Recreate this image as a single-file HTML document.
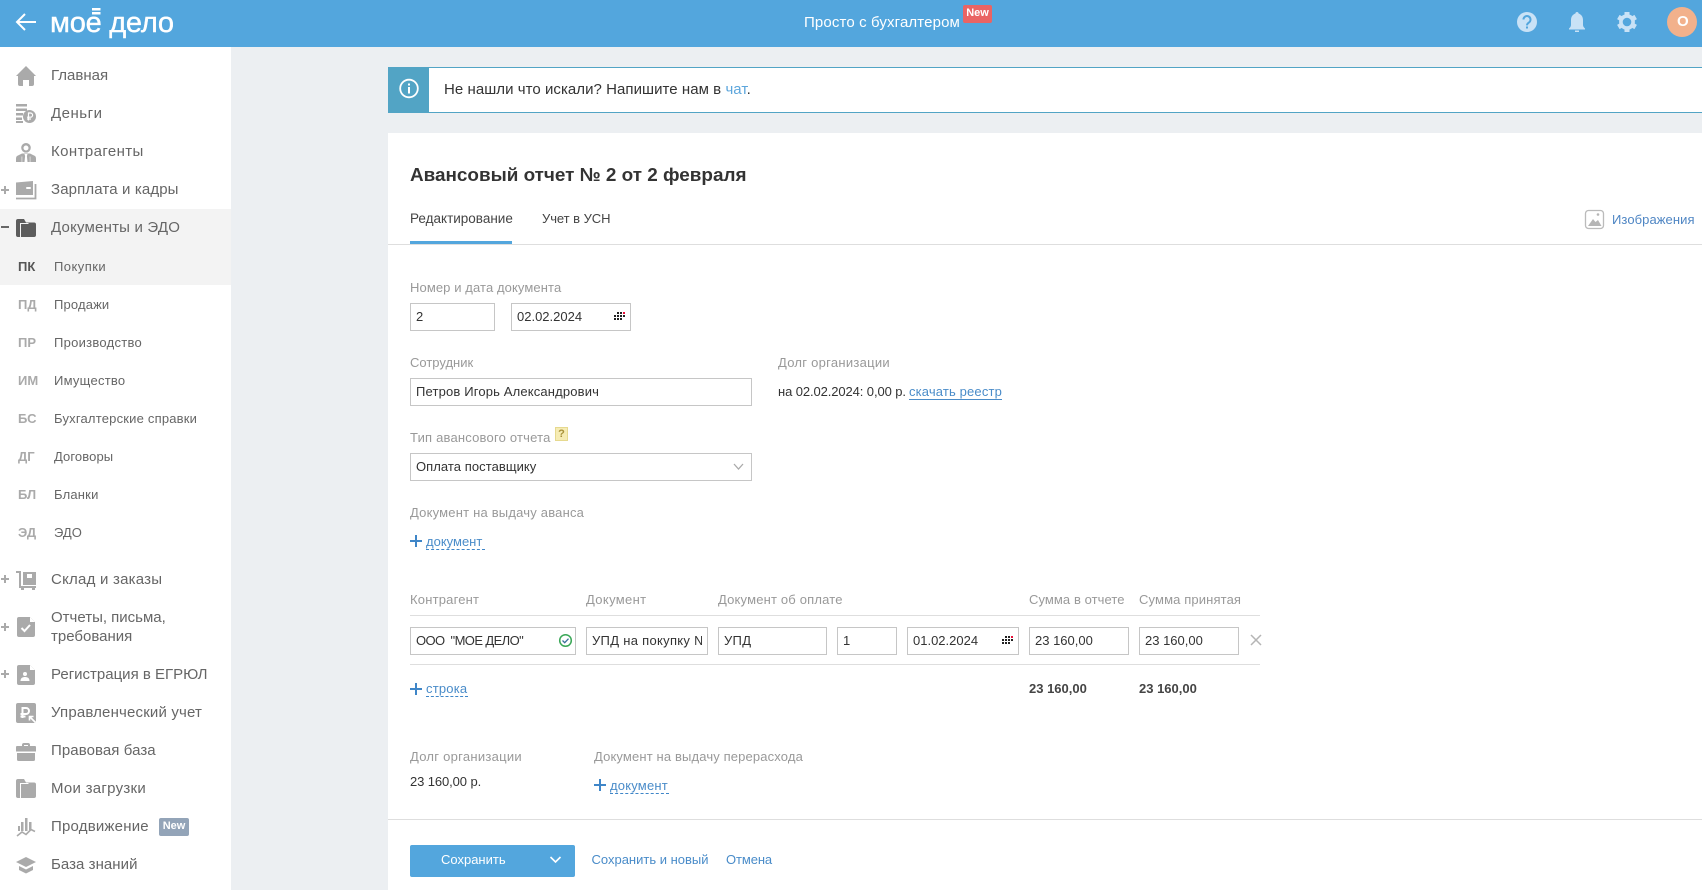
<!DOCTYPE html>
<html lang="ru"><head><meta charset="utf-8"><title>Авансовый отчет</title>
<style>
html,body{margin:0;padding:0}
body{position:relative;width:1702px;height:890px;overflow:hidden;background:#eceff2;font-family:"Liberation Sans",Arial,sans-serif;color:#333}
.abs,.t,.in{position:absolute}
.t{white-space:nowrap;line-height:20px;height:20px}
header{position:absolute;left:0;top:0;width:1702px;height:47px;background:#53a6dd}
aside{position:absolute;left:0;top:47px;width:231px;height:843px;background:#fff}
.m{left:51px;font-size:15px;color:#666}
.s{left:54px;font-size:13px;color:#666}
.a{left:18px;font-size:13px;font-weight:bold;color:#aaa}
.l{font-size:13px;color:#999}
.v{font-size:13px;color:#333}
.in{box-sizing:border-box;height:28px;border:1px solid #c6c6c6;background:#fff;font-size:13px;line-height:26px;padding-left:5px;color:#333;white-space:nowrap;overflow:hidden}
.lk{color:#4a8cc9}
.dash{border-bottom:1px dashed #3f86c8;height:0;position:absolute}
.hr{position:absolute;height:1px;background:#dedede}
.plus{position:absolute;width:12px;height:12px}
.plus:before,.plus:after{content:"";position:absolute;background:#3f86c8}
.plus:before{left:0;right:0;top:5px;height:2px}
.plus:after{top:0;bottom:0;left:5px;width:2px}
svg{position:absolute;left:0;top:0}
</style></head><body>

<header>
<svg width="1702" height="47" viewBox="0 0 1702 47">
<path d="M36 22H17M25 14l-8 8 8 8" fill="none" stroke="#fff" stroke-width="2"/>
<rect x="92" y="8" width="8.500" height="2.500" fill="#fff"/><rect x="92" y="12" width="8.500" height="2.500" fill="#fff"/>
<circle cx="1527" cy="22" r="10" fill="#c9e2f6"/>
<path d="M1523.500 19.500a3.500 3.500 0 1 1 5.500 2.900c-1.300.9-2 1.500-2 3" fill="none" stroke="#53a6dd" stroke-width="2"/><rect x="1526" y="26.500" width="2" height="2" fill="#53a6dd"/>
<path d="M1577 12c1 0 1.500.6 1.600 1.500 2.700.9 4.400 3.300 4.400 6.500v5c0 1.500 1 2.500 2 3.500v1h-16v-1c1-1 2-2 2-3.500v-5c0-3.200 1.700-5.600 4.400-6.500.1-.9.600-1.500 1.600-1.500z" fill="#c9e2f6"/><rect x="1575" y="30.500" width="4" height="1.500" fill="#c9e2f6"/>
<g fill="#c9e2f6">
<circle cx="1627" cy="22" r="6.100" fill="none" stroke="#c9e2f6" stroke-width="3.600"/>
<rect x="1624.500" y="12" width="5" height="4"/>
<rect x="1624.500" y="12" width="5" height="4" transform="rotate(60 1627 22)"/>
<rect x="1624.500" y="12" width="5" height="4" transform="rotate(120 1627 22)"/>
<rect x="1624.500" y="12" width="5" height="4" transform="rotate(180 1627 22)"/>
<rect x="1624.500" y="12" width="5" height="4" transform="rotate(240 1627 22)"/>
<rect x="1624.500" y="12" width="5" height="4" transform="rotate(300 1627 22)"/>
</g>
<circle cx="1682" cy="22" r="15" fill="#f2b18c"/>
</svg>
<div class="t" style="left:50px;top:7px;font-size:29px;color:#fff;line-height:32px;height:32px;letter-spacing:-.25px;-webkit-text-stroke:.4px #fff">мое дело</div>
<div class="t" style="left:804px;top:13px;font-size:15px;letter-spacing:.13px;color:#fff">Просто с бухгалтером</div>
<div class="abs" style="left:963px;top:5px;width:29px;height:18px;background:#ea6464;border-radius:2px;color:#fff;font-size:11px;font-weight:bold;text-align:center;line-height:16px">New</div>
<div class="t" style="left:1677px;top:12px;font-size:15px;font-weight:bold;color:#fff;width:10px;text-align:center">О</div>
</header>

<aside></aside>
<div class="abs" style="left:0;top:209px;width:231px;height:76px;background:#f3f3f3"></div>

<svg width="231" height="890" viewBox="0 0 231 890" style="z-index:1">
<g fill="#aaa">
<!-- home -->
<path d="M26 66L36 76H34V84a2 2 0 0 1-2 2H29V80H23V86H20a2 2 0 0 1-2-2V76H16Z"/>
<!-- money -->
<path d="M16 104h11v2.500H16zM16 108.500h11V111H16zM16 113h7v2.500h-7zM16 117.500h6V120h-6zM16 121h7v2h-7z"/>
<circle cx="29.500" cy="116.500" r="6.500"/>
<path d="M28.500 120.500v-7.500h2a2 2 0 0 1 0 4.200h-3.500M27 119h4" fill="none" stroke="#fff" stroke-width="1.200"/>
<!-- contragent -->
<path fill-rule="evenodd" d="M26 143a4.800 4.800 0 1 1 0 9.600 4.800 4.800 0 0 1 0-9.600zm0 2.500a2.500 2.500 0 1 0 0 5 2.500 2.500 0 0 0 0-5z"/>
<path d="M22 153.500h8l5 2.500c.7.500 1 1.500 1 3v3H16v-3c0-1.500.3-2.500 1-3z"/>
<path d="M24.500 154h3l-.6 2 .6 6h-3l.6-6z" fill="#fff"/>
<path d="M21.500 156.500h.8V162h-.8zM29.700 156.500h.8V162h-.8z" fill="#e4e4e4"/>
<!-- wallet -->
<path d="M16 182.500l17-1.500v14H16z"/><path d="M35.500 184v14.500H16" fill="none" stroke="#aaa" stroke-width="1.800"/><rect x="26" y="187" width="5" height="2" rx="1" fill="#fff"/>
<!-- cart -->
<path d="M23 572h13v13H23z"/><path d="M16 572h4v15h16" fill="none" stroke="#aaa" stroke-width="2"/><rect x="21" y="588" width="3" height="2"/><rect x="32" y="588" width="3" height="2"/>
<rect x="27" y="574" width="5" height="4" fill="#fff"/>
<!-- report -->
<path d="M19 617h11l5 5v13a2 2 0 0 1-2 2H19a2 2 0 0 1-2-2v-16a2 2 0 0 1 2-2z"/>
<path d="M30 617l5 5h-5z" fill="#fff"/><path d="M21.500 628l3 3 5.500-6" fill="none" stroke="#fff" stroke-width="2"/>
<!-- register -->
<path d="M19 665h11l5 5v13a2 2 0 0 1-2 2H19a2 2 0 0 1-2-2v-16a2 2 0 0 1 2-2z"/>
<path d="M30 665l5 5h-5z" fill="#fff"/><circle cx="25" cy="674" r="2" fill="#fff"/><path d="M20.500 681c0-3 2-4 4.500-4s4.500 1 4.500 4z" fill="#fff"/>
<!-- manage -->
<rect x="16" y="703" width="20" height="20" rx="2"/>
<path d="M22.500 718V708h3.500a3 3 0 0 1 0 6h-5.500M20.500 716.500h5" fill="none" stroke="#fff" stroke-width="2"/>
<path d="M29.500 716.500l6 6M29.500 720.500v-4h4" fill="none" stroke="#fff" stroke-width="1.600"/>
<!-- briefcase -->
<path d="M22 745a2 2 0 0 1 2-2h4a2 2 0 0 1 2 2v1h5a1 1 0 0 1 1 1v4.500H16V747a1 1 0 0 1 1-1h5zm2 0v1h4v-1z"/>
<path d="M17 753h18v6.500a1.500 1.500 0 0 1-1.500 1.500h-15a1.500 1.500 0 0 1-1.500-1.500z"/>
<!-- folder -->
<path d="M16 781a2 2 0 0 1 2-2h6l2 3.500h8a2 2 0 0 1 2 2V796a2 2 0 0 1-2 2H18a2 2 0 0 1-2-2z"/>
<path d="M20.500 798v-14.500h8" fill="none" stroke="#fff" stroke-width="1"/>
<!-- chart -->
<rect x="25" y="818" width="2.500" height="13"/><rect x="29" y="822" width="2.500" height="8"/><rect x="21" y="822" width="2.500" height="9"/><rect x="18" y="826" width="2" height="5"/>
<path d="M17 836l5-4 4 2.500 5-5 4 2" fill="none" stroke="#aaa" stroke-width="1.600"/>
<!-- cap -->
<path d="M26 857l10 5-10 5-10-5zM19 866l7 3.500 7-3.500v4l-7 3.500-7-3.500z"/>
<!-- plus -->
<path d="M1 189h8v2H1zM4 186h2v8H4zM1 578h8v2H1zM4 575h2v8H4zM1 626h8v2H1zM4 623h2v8H4zM1 673h8v2H1zM4 670h2v8H4z"/>
</g>
<path d="M1 226h8v2H1z" fill="#666"/>
<path d="M16 221a2 2 0 0 1 2-2h6l2 3.500h8a2 2 0 0 1 2 2V235a2 2 0 0 1-2 2H18a2 2 0 0 1-2-2z" fill="#5c5c5c"/>
<path d="M20.500 237v-13.500h8" fill="none" stroke="#f3f3f3" stroke-width="1"/>
</svg>

<div style="position:absolute;left:0;top:0;z-index:2">
<div class="t m" style="top:66px">Главная</div>
<div class="t m" style="top:104px;letter-spacing:.5px">Деньги</div>
<div class="t m" style="top:142px;letter-spacing:.4px">Контрагенты</div>
<div class="t m" style="top:180px;letter-spacing:.13px">Зарплата и кадры</div>
<div class="t m" style="top:218px;letter-spacing:.2px">Документы и ЭДО</div>
<div class="t a" style="top:257px;color:#555">ПК</div><div class="t s" style="top:257px;letter-spacing:.45px">Покупки</div>
<div class="t a" style="top:295px">ПД</div><div class="t s" style="top:295px;letter-spacing:.15px">Продажи</div>
<div class="t a" style="top:333px">ПР</div><div class="t s" style="top:333px;letter-spacing:.27px">Производство</div>
<div class="t a" style="top:371px">ИМ</div><div class="t s" style="top:371px;letter-spacing:.25px">Имущество</div>
<div class="t a" style="top:409px">БС</div><div class="t s" style="top:409px;letter-spacing:.2px">Бухгалтерские справки</div>
<div class="t a" style="top:447px">ДГ</div><div class="t s" style="top:447px;letter-spacing:.1px">Договоры</div>
<div class="t a" style="top:485px">БЛ</div><div class="t s" style="top:485px;letter-spacing:.2px">Бланки</div>
<div class="t a" style="top:523px">ЭД</div><div class="t s" style="top:523px">ЭДО</div>
<div class="t m" style="top:570px;letter-spacing:.23px">Склад и заказы</div>
<div class="t m" style="top:608px">Отчеты, письма,</div>
<div class="t m" style="top:627px">требования</div>
<div class="t m" style="top:665px">Регистрация в ЕГРЮЛ</div>
<div class="t m" style="top:703px;letter-spacing:.17px">Управленческий учет</div>
<div class="t m" style="top:741px;letter-spacing:.08px">Правовая база</div>
<div class="t m" style="top:779px;letter-spacing:.27px">Мои загрузки</div>
<div class="t m" style="top:817px;letter-spacing:.2px">Продвижение</div>
<div class="abs" style="left:159px;top:818px;width:30px;height:18px;background:#93a4b8;border-radius:2px;color:#fff;font-size:11px;font-weight:bold;text-align:center;line-height:17px">New</div>
<div class="t m" style="top:855px;letter-spacing:.05px">База знаний</div>
</div>

<!-- alert -->
<div class="abs" style="left:388px;top:67px;width:1314px;height:46px;box-sizing:border-box;background:#fff;border-top:1px solid #52a4c5;border-bottom:1px solid #52a4c5"></div>
<div class="abs" style="left:388px;top:67px;width:41px;height:46px;background:#52a4c5"></div>
<svg width="1702" height="890" viewBox="0 0 1702 890" style="pointer-events:none;z-index:1">
<circle cx="409" cy="88.500" r="8.800" fill="none" stroke="#fff" stroke-width="1.800"/><rect x="408" y="87" width="2" height="6.500" fill="#fff"/><rect x="408" y="83.500" width="2" height="2" fill="#fff"/>
</svg>
<div class="t" style="left:444px;top:80px;font-size:15px;letter-spacing:.05px;color:#333;z-index:2">Не нашли что искали? Напишите нам в <span style="color:#5da6dc">чат</span>.</div>

<!-- card -->
<div class="abs" style="left:388px;top:133px;width:1314px;height:757px;background:#fff"></div>
<div class="t" style="left:410px;top:166px;font-size:18.900px;font-weight:bold;color:#333">Авансовый отчет № 2 от 2 февраля</div>
<div class="t" style="left:410px;top:209px;font-size:13.500px;color:#444">Редактирование</div>
<div class="t" style="left:542px;top:209px;font-size:13px;letter-spacing:-.05px;color:#444">Учет в УСН</div>
<div class="abs" style="left:410px;top:241px;width:102px;height:3px;background:#53a6dd"></div>
<div class="hr" style="left:388px;top:244px;width:1314px"></div>
<svg width="1702" height="890" viewBox="0 0 1702 890" style="z-index:1">
<rect x="1585.500" y="210.500" width="18" height="18" rx="3" fill="none" stroke="#bbb" stroke-width="1.300"/>
<path d="M1588 226l5-7 2.500 3 2.500-2 3.500 6z" fill="#b5b5b5"/><circle cx="1598" cy="214.500" r="1.300" fill="#b5b5b5"/>
</svg>
<div class="t" style="left:1612px;top:210px;font-size:13px;letter-spacing:.08px;color:#4f86c4">Изображения</div>

<div class="t l" style="left:410px;top:278px;letter-spacing:.1px">Номер и дата документа</div>
<div class="in" style="left:410px;top:303px;width:85px">2</div>
<div class="in" style="left:511px;top:303px;width:120px">02.02.2024</div>

<div class="t l" style="left:410px;top:353px">Сотрудник</div>
<div class="in" style="left:410px;top:378px;width:342px;letter-spacing:.16px">Петров Игорь Александрович</div>
<div class="t l" style="left:778px;top:353px;letter-spacing:.27px">Долг организации</div>
<div class="t v" style="left:778px;top:382px;letter-spacing:-.1px">на 02.02.2024: 0,00 р.</div>
<div class="t lk" style="left:909px;top:382px;font-size:13px;letter-spacing:.15px">скачать реестр</div>
<div class="abs" style="left:909px;top:399px;width:93px;height:1px;background:#4a8cc9"></div>

<div class="t l" style="left:410px;top:428px;letter-spacing:.2px">Тип авансового отчета</div>
<div class="abs" style="left:555px;top:427px;width:13px;height:14px;box-sizing:border-box;background:#f6ecb4;border:1px solid #e6d98f;color:#a8913a;font-size:11px;font-weight:bold;line-height:12px;text-align:center">?</div>
<div class="in" style="left:410px;top:453px;width:342px;letter-spacing:.06px">Оплата поставщику</div>

<div class="t l" style="left:410px;top:503px;letter-spacing:.2px">Документ на выдачу аванса</div>
<div class="plus" style="left:410px;top:535px"></div>
<div class="t lk" style="left:426px;top:532px;font-size:13px">документ</div>
<div class="dash" style="left:426px;top:549px;width:59px"></div>

<div class="t l" style="left:410px;top:590px;letter-spacing:.2px">Контрагент</div>
<div class="t l" style="left:586px;top:590px;letter-spacing:.35px">Документ</div>
<div class="t l" style="left:718px;top:590px;letter-spacing:.18px">Документ об оплате</div>
<div class="t l" style="left:1029px;top:590px;letter-spacing:.08px">Сумма в отчете</div>
<div class="t l" style="left:1139px;top:590px;letter-spacing:.13px">Сумма принятая</div>
<div class="hr" style="left:410px;top:615px;width:850px"></div>
<div class="in" style="left:410px;top:627px;width:166px;letter-spacing:-.6px">ООО&nbsp; "МОЕ ДЕЛО"</div>
<div class="in" style="left:586px;top:627px;width:122px;letter-spacing:.3px"><div style="width:110px;overflow:hidden">УПД на покупку №1</div></div>
<div class="in" style="left:718px;top:627px;width:109px;letter-spacing:.3px">УПД</div>
<div class="in" style="left:837px;top:627px;width:60px">1</div>
<div class="in" style="left:907px;top:627px;width:112px">01.02.2024</div>
<div class="in" style="left:1029px;top:627px;width:100px">23 160,00</div>
<div class="in" style="left:1139px;top:627px;width:100px">23 160,00</div>
<div class="hr" style="left:410px;top:664px;width:850px"></div>
<svg width="1702" height="890" viewBox="0 0 1702 890" style="z-index:1">
<!-- calendar dots -->
<g fill="#222">
<path d="M617 312h2v2h-2zM620 312h2v2h-2zM614 315h2v2h-2zM617 315h2v2h-2zM620 315h2v2h-2zM623 315h2v2h-2zM614 318h2v2h-2zM617 318h2v2h-2zM620 318h2v2h-2z"/>
<path d="M1005 636h2v2h-2zM1008 636h2v2h-2zM1002 639h2v2h-2zM1005 639h2v2h-2zM1008 639h2v2h-2zM1011 639h2v2h-2zM1002 642h2v2h-2zM1005 642h2v2h-2zM1008 642h2v2h-2z"/>
</g>
<rect x="623" y="312" width="2" height="2" fill="#e8103a"/><rect x="1011" y="636" width="2" height="2" fill="#e8103a"/>
<!-- select chevron -->
<path d="M734 464l4.500 5 4.500-5" fill="none" stroke="#aaa" stroke-width="1.300"/>
<!-- check -->
<circle cx="565.500" cy="640.500" r="5.800" fill="none" stroke="#3aa757" stroke-width="1.500"/>
<path d="M562.500 640.500l2.200 2.200 3.800-4" fill="none" stroke="#3a6f9a" stroke-width="1.300"/>
<!-- X -->
<path d="M1251 635l10 10M1261 635l-10 10" stroke="#b5b5b5" stroke-width="1.500" fill="none"/>
</svg>

<div class="plus" style="left:410px;top:683px"></div>
<div class="t lk" style="left:426px;top:679px;font-size:13px;letter-spacing:.2px">строка</div>
<div class="dash" style="left:426px;top:696px;width:42px"></div>
<div class="t" style="left:1029px;top:679px;font-size:13px;font-weight:bold;color:#444">23 160,00</div>
<div class="t" style="left:1139px;top:679px;font-size:13px;font-weight:bold;color:#444">23 160,00</div>

<div class="t l" style="left:410px;top:747px;letter-spacing:.27px">Долг организации</div>
<div class="t v" style="left:410px;top:772px;letter-spacing:-.1px">23 160,00 р.</div>
<div class="t l" style="left:594px;top:747px;letter-spacing:.14px">Документ на выдачу перерасхода</div>
<div class="plus" style="left:594px;top:779px"></div>
<div class="t lk" style="left:610px;top:776px;font-size:13px;letter-spacing:.2px">документ</div>
<div class="dash" style="left:610px;top:793px;width:59px"></div>

<div class="hr" style="left:388px;top:819px;width:1314px"></div>
<div class="abs" style="left:410px;top:845px;width:165px;height:32px;background:#53a6dd;border-radius:2px"></div>
<div class="t" style="left:441px;top:850px;font-size:13px;color:#fff">Сохранить</div>
<svg width="1702" height="890" viewBox="0 0 1702 890"><path d="M550.500 857l5 5 5-5" fill="none" stroke="#fff" stroke-width="1.600"/></svg>
<div class="t lk" style="left:591.500px;top:850px;font-size:13px">Сохранить и новый</div>
<div class="t lk" style="left:726px;top:850px;font-size:13px;letter-spacing:-.1px">Отмена</div>
</body></html>
